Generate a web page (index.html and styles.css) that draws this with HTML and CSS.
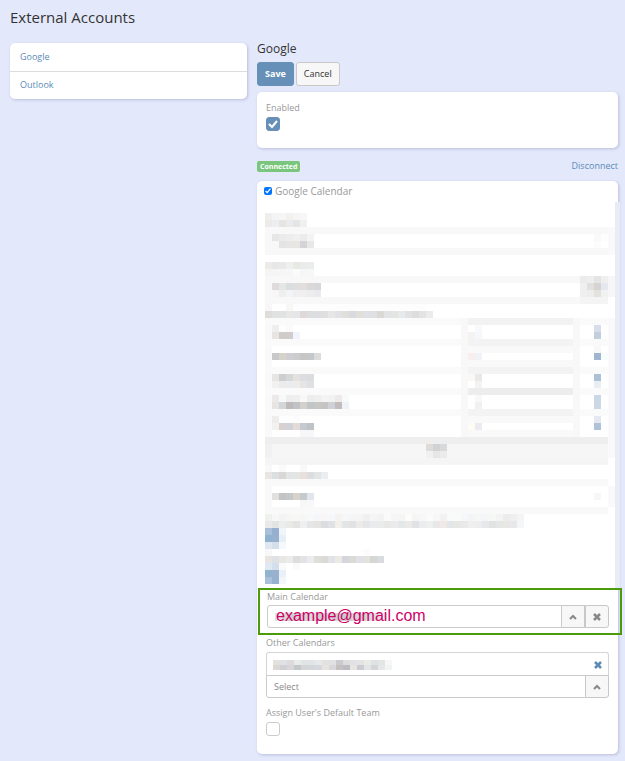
FILE: index.html
```
<!DOCTYPE html>
<html lang="en">
<head>
    <meta charset="UTF-8">
    <meta name="viewport" content="width=device-width, initial-scale=1.0">
    <title>External Accounts</title>
    <link rel="stylesheet" href="styles.css">
</head>
<body>
    <div class="page">
        <h1>External Accounts</h1>
        <div class="columns">
            <nav class="panel account-list">
                <a href="#google">Google</a>
                <a href="#outlook">Outlook</a>
            </nav>

            <main>
                <h2>Google</h2>
                <div class="button-row">
                    <button type="button" class="btn btn-primary">Save</button>
                    <button type="button" class="btn">Cancel</button>
                </div>

                <div class="panel enabled-panel">
                    <label class="field-label" for="enabled">Enabled</label>
                    <input type="checkbox" id="enabled" class="check" checked>
                </div>

                <div class="status-row">
                    <span class="badge">Connected</span>
                    <a href="#disconnect">Disconnect</a>
                </div>

                <form class="panel calendar-panel">
                    <div class="calendar-head">
                        <input type="checkbox" id="googleCalendar" checked>
                        <label for="googleCalendar">Google Calendar</label>
                    </div>

                    <svg id="settings" class="settings" aria-hidden="true"></svg>

                    <div class="highlight">
                        <label class="field-label" for="mainCalendar">Main Calendar</label>
                        <div class="input-group">
                            <div class="value-box">
                                <svg id="mainValue" class="value-mosaic" aria-hidden="true"></svg>
                                <input type="text" id="mainCalendar" class="main-input" value="example@gmail.com">
                            </div>
                            <button type="button" class="btn-icon" aria-label="Select calendar">
                                <svg width="8" height="6" viewBox="0 0 8 6"><path d="M1 5l3-3 3 3"/></svg>
                            </button>
                            <button type="button" class="btn-icon" aria-label="Clear calendar">
                                <svg class="cross" width="8" height="8" viewBox="0 0 8 8"><path d="M1 1l6 6M7 1l-6 6"/></svg>
                            </button>
                        </div>
                    </div>

                    <div class="field">
                        <label class="field-label" for="otherCalendars">Other Calendars</label>
                        <div class="list-item">
                            <svg id="otherValue" class="item-mosaic" aria-hidden="true"></svg>
                            <button type="button" class="btn-remove" aria-label="Remove calendar">
                                <svg class="cross" width="8" height="8" viewBox="0 0 8 8"><path d="M1 1l6 6M7 1l-6 6"/></svg>
                            </button>
                        </div>
                        <div class="input-group attached">
                            <input type="text" id="otherCalendars" class="select-input" placeholder="Select">
                            <button type="button" class="btn-icon" aria-label="Select other calendar">
                                <svg width="8" height="6" viewBox="0 0 8 6"><path d="M1 5l3-3 3 3"/></svg>
                            </button>
                        </div>
                    </div>

                    <div class="field team-field">
                        <label class="field-label" for="defaultTeam">Assign User's Default Team</label>
                        <input type="checkbox" id="defaultTeam" class="check">
                    </div>
                </form>
            </main>
        </div>
    </div>
    <script src="mosaic.js"></script>
</body>
</html>
```
FILE: styles.css
```
* {
    box-sizing: border-box;
}

body {
    margin: 0;
    background: #e3e8fb;
    font-family: "Open Sans", sans-serif;
    font-size: 9px;
    line-height: 14px;
    color: #333;
}

a {
    color: #5b8bb5;
    text-decoration: none;
}

.page {
    padding: 7px 7px 8px 10px;
}

h1 {
    margin: 0 0 16px;
    font-size: 15px;
    line-height: 20px;
    font-weight: 400;
}

h2 {
    margin: 0 0 6px;
    font-size: 12px;
    line-height: 15px;
    font-weight: 400;
}

.columns {
    display: grid;
    grid-template-columns: 237px 1fr;
    gap: 10px;
    align-items: start;
}

.panel {
    background: #fff;
    border-radius: 5px;
    box-shadow: 1px 1px 3px rgba(60, 70, 120, 0.25);
}

.account-list a {
    display: block;
    padding: 7px 10px;
}

.account-list a + a {
    padding-top: 6px;
    border-top: 1px solid #ddd;
}

main {
    min-width: 0;
    margin-top: -2px;
}

.button-row {
    display: flex;
    gap: 2px;
    margin-bottom: 6px;
}

.btn {
    height: 24px;
    padding: 0 7px;
    border: 1px solid #c8c8c8;
    border-radius: 3px;
    background: #f7f7f7;
    color: #333;
    font: 9px/14px "Open Sans", sans-serif;
}

.btn-primary {
    border-color: #6690b8;
    background: #6690b8;
    color: #fff;
    font-weight: 700;
}

.enabled-panel {
    padding: 9px 9px 17px;
}

.field-label {
    display: block;
    color: #999;
}

.check {
    display: block;
    appearance: none;
    width: 14px;
    height: 14px;
    margin: 2px 0 0;
    border: 1px solid #ccc;
    border-radius: 3px;
    background: #fff;
}

.check:checked {
    border-color: #6690b8;
    background: #6690b8 url("data:image/svg+xml,%3Csvg xmlns='http://www.w3.org/2000/svg' viewBox='0 0 12 12'%3E%3Cpath d='M2 6l3 3 5-6' fill='none' stroke='white' stroke-width='2'/%3E%3C/svg%3E") center / 12px no-repeat;
}

.status-row {
    display: flex;
    align-items: center;
    justify-content: space-between;
    padding: 11px 0 8px;
}

.badge {
    padding: 0 3px;
    border-radius: 2px;
    background: #79c67c;
    color: #fff;
    font-size: 7px;
    line-height: 11px;
    font-weight: 700;
}

.calendar-panel {
    padding-bottom: 18px;
}

.calendar-head {
    display: flex;
    align-items: center;
    gap: 3px;
    height: 21px;
    padding: 0 0 1px 7px;
    color: #999;
    font-size: 10px;
}

.calendar-head input {
    width: 8px;
    height: 8px;
    margin: 0;
}

.settings {
    display: block;
    width: 355px;
    height: 387px;
    margin-left: 8px;
    margin-bottom: -1px;
    overflow: visible;
}

/* runs a little past the right edge of the panel */
.highlight {
    position: relative;
    margin: 0 -4px 0 1px;
    padding: 0 11px 5px 7px;
    border: 2px solid #4b9b0b;
}

.input-group {
    display: flex;
    height: 23px;
    margin-top: 1px;
}

.value-box {
    position: relative;
    flex: 1;
    border: 1px solid #ccc;
    border-radius: 3px 0 0 3px;
}

.value-mosaic {
    position: absolute;
    left: 7px;
    top: 7px;
    width: 112px;
    height: 8px;
}

.main-input {
    position: relative;
    display: block;
    width: 100%;
    height: 20px;
    padding: 0 8px;
    border: 0;
    background: transparent;
    color: #cf0067;
    font: 16px/18px "Liberation Sans", Arial, sans-serif;
}

.btn-icon {
    display: flex;
    align-items: center;
    justify-content: center;
    width: 24px;
    margin-left: -1px;
    padding: 0;
    border: 1px solid #c8c8c8;
    background: #f7f7f7;
    color: #888;
}

.btn-icon + .btn-icon {
    margin-left: 0;
}

.btn-icon:last-child {
    border-radius: 0 3px 3px 0;
}

.btn-icon path,
.btn-remove path {
    fill: none;
    stroke: currentColor;
    stroke-width: 2;
}

.btn-icon .cross path,
.btn-remove .cross path {
    stroke-width: 2.5;
}

.field {
    padding: 1px 9px 0;
}

.list-item {
    display: flex;
    align-items: center;
    justify-content: space-between;
    height: 24px;
    margin-top: 2px;
    padding: 0 6px;
    border: 1px solid #d5d5d5;
    border-bottom: 0;
    border-radius: 3px 3px 0 0;
}

.item-mosaic {
    width: 119px;
    height: 10px;
}

.btn-remove {
    display: flex;
    padding: 0;
    border: 0;
    background: none;
    color: #5b8bb5;
}

.attached {
    margin-top: -1px;
}

.select-input {
    flex: 1;
    min-width: 0;
    padding: 0 7px;
    border: 1px solid #ccc;
    border-radius: 0 0 0 3px;
    color: #555;
    font: 9px/14px "Open Sans", sans-serif;
}

.select-input::placeholder {
    color: #888;
}

.attached .btn-icon:last-child {
    border-radius: 0 0 3px 0;
}

.team-field {
    padding-top: 8px;
}
```
FILE: mosaic.js
```
const CELL = 7;

function block(svg, x, y, w, h, color) {
    const rect = document.createElementNS("http://www.w3.org/2000/svg", "rect");
    rect.setAttribute("x", x);
    rect.setAttribute("y", y);
    rect.setAttribute("width", w);
    rect.setAttribute("height", h);
    rect.setAttribute("fill", "#" + color);
    svg.appendChild(rect);
}

function cells(svg, col, row, colors, top = 0, height = CELL) {
    colors.split(" ").forEach((color, i) => {
        block(svg, (col + i) * CELL, top + row * height, CELL, height, color);
    });
}

const settings = document.getElementById("settings");
const TOP = 11;

// wide bands: col, row, columns, rows, color
[
    [0, 2, 1, 4, "f8f8f8"], [0, 9, 1, 4, "f8f8f8"], [0, 15, 1, 17, "f9f9f9"], [0, 38, 1, 4, "f9f9f9"],
    [49, 2, 1, 4, "f9f9f9"], [49, 9, 1, 3, "f6f6f6"], [49, 15, 1, 20, "f9f9f9"], [49, 39, 1, 3, "f9f9f9"],
    [0, 2, 49, 1, "f8f8f8"], [0, 5, 49, 1, "f8f8f8"],
    [0, 9, 49, 1, "f8f8f8"], [0, 12, 45, 1, "f8f8f8"], [45, 12, 4, 1, "f4f4f4"],
    [0, 15, 49, 1, "fafafa"], [0, 18, 49, 1, "fafafa"], [0, 22, 49, 1, "fafafa"],
    [0, 25, 49, 1, "fafafa"], [0, 28, 49, 1, "fafafa"],
    [28, 15, 1, 17, "f8f8f8"], [44, 15, 1, 17, "f8f8f8"],
    [29, 15, 15, 1, "f2f2f2"], [29, 18, 15, 1, "f3f3f3"], [29, 19, 15, 1, "f9f9f9"],
    [29, 21, 15, 1, "f9f9f9"], [29, 22, 15, 1, "f3f3f3"], [29, 25, 15, 1, "ededed"],
    [29, 28, 15, 1, "f3f3f3"], [29, 29, 15, 1, "f9f9f9"], [29, 31, 15, 1, "f9f9f9"],
    [0, 32, 49, 1, "eeeeee"], [0, 33, 49, 2, "f6f6f6"], [0, 33, 1, 2, "f1f1f1"], [0, 35, 49, 1, "f5f5f5"],
    [0, 38, 49, 1, "f9f9f9"], [0, 42, 49, 1, "f9f9f9"], [4, 13, 19, 1, "fdfdfd"]
].forEach(([col, row, w, h, color]) => {
    block(settings, col * CELL, TOP + row * CELL, w * CELL, h * CELL, color);
});

// single cells: col, row, colors
[
    [0, 0, "efefee f4f4f4 f6f6f6 f2f1f0 f5f5f5 f7f7f7"],
    [0, 1, "ecebe9 eceff1 e6e5e2 e8ecef e5e5e5 eef1f0"],
    [1, 3, "e6e6e6 ebebeb ecedef f0f0ef ebebeb f3f3f3"],
    [47, 3, "f9f9f9 fdfdfd"],
    [1, 4, "f8f8f8 e4e4e4 e7e6e5 e7e6e3 d4d4d7 e6e8e6"],
    [47, 4, "fcfcfc"],
    [0, 7, "ecebe9 e7e7e7 e9e9e9 eef0ef e9e9e4 eaebeb ebeced"],
    [0, 8, "f5f5f5 f4f5f6 f6f6f6 f6f7f8 fbfbfb f6f6f6 f7f7f7"],
    [45, 9, "ebebeb eeeeee e3e4e5 efefee"],
    [1, 10, "dfdbdd e3e7e5 dcdddf dededf e3dddc d9d9db d7d7d9"],
    [45, 10, "efefef e1e0df d7d3d0 e6e8f1"],
    [1, 11, "f7f7f7 efeeee f2f4f7 efefef efeff0 edecef eaeaee"],
    [45, 11, "efefef ededec e4e2df f1f1f1"],
    [0, 13, "f7f7f7"], [3, 13, "f8f7f6"],
    [0, 14, "dedddb e0e1e1 e1e2e2 e9e7e5 e4e6e9 dfd8d8 dcdddf dddee0 e0e0e0 e7e7e5 e0e2e5 e0dfda d8dadf e2deda dfe1e4 dee0e4 dbd8d4 e2e3e4 e4e4e3 e8e9eb e1e2e3 dedddb e2e3e5 ebebeb"],
    [1, 16, "efeeec fcfdfd fafafa"], [30, 16, "f8f9fa"], [47, 16, "d7dee9"],
    [1, 17, "e6e5e4 cecdca d0cccb f1f4fa"], [29, 17, "f5f3f2 f4f8fc"], [47, 17, "c3cfdf"],
    [47, 19, "f8f8fa"],
    [1, 20, "c9c8c8 d6d3cd cfcfd3 ccccce c6c6c5 c4c8cb dcdcde"], [29, 20, "f7eeed eff3f8"], [47, 20, "a0b6d0 f9fcfd"],
    [1, 23, "e6e5e4 cececf d6d7d9 e4e1de dcdde0 dadcdf"], [29, 23, "faf7f5 e9e9ea"], [47, 23, "acc0d8"],
    [1, 24, "f2f1f1 ebebeb eaecef eeecea e6e5e4 dde1e4"], [30, 24, "f3f3f3"], [47, 24, "ebedf4"],
    [1, 26, "ebeae8 f7f8f8 eeeeee efefee f7f8f9 ecedec efefef f4f4f4 f2f2f2 ecebe9 f8f9fb"], [30, 26, "f7f9f8"], [47, 26, "cbd7e6"],
    [1, 27, "e6e5e2 d3d6d9 bfbaba c0c2c7 d3d1ca c1c5c6 c7c8c6 c7c3c2 ced1d8 c2bdbc eff2f8"], [30, 27, "eff1f2"], [47, 27, "cdd8e5"],
    [1, 29, "efedeb fbfdfe fcfdfd fcfcfc"], [47, 29, "e6e8f1"],
    [1, 30, "f1f1ef d9d1d0 d1d2d9 e3dcd6 c5cad0 bec3c8"], [29, 30, "fdfdf6 ebebf1"], [47, 30, "afc2d9"],
    [5, 31, "f7f7f8 f6f6fb"],
    [23, 33, "dedbd9 d0d3d5 d9d9d9"],
    [23, 34, "f0f0f0 e6e6e6 ebebeb"],
    [0, 36, "f8f8f8"], [2, 36, "fafafa"], [5, 36, "f8f8f8"],
    [0, 37, "e9e5e2 dcdfe0 dad8d6 e3e4e5 e4e5e5 e7e0dd dbddde e1e5e5 ebeeee"],
    [1, 40, "e2dfdf c3c3c3 c4c8ca d8d2cb c5cacd e2e5ed"], [47, 40, "f7f7f7"],
    [5, 41, "f8f7f6 f6f8fb"],
    [0, 43, "eff1ef f7f7f7 f2f4f3 f6f6f4 f7f7f5 f6f6f4 f6f8fa f4f6fa f8f7f5 f5f7fa f5f3f1 f7f7f7 f4f5f6 f5f5f5 f0f0f0 f5f5f5 f2f2f2 fafafa f6f6f5 f5f5f5 fcfcf9 f6f5f4 f7f7f7 fbfbfb f7f7f7 f4f2f1 f8f9f9 fafaf8 f5f7fa f4f4f5 f5f7f7 f3f5f8 f7f7f6 f3f3f4 edecea eeeff1 f4f4f4"],
    [0, 44, "e9e9e9 e3e3e3 eceeed e9e9e6 e4e5e3 eef0f0 e5e6e8 e6e4e2 dcdde1 dfe1e5 f3f0ec e4e5e7 e2e2e4 ecebe7 e5e6e8 e9ebec ebebeb e8e9e7 ebebeb e5e8e9 ebeae8 e0e2e6 ebecee eef0ef e8e8e9 f0e9e7 e3e6e8 e7e7e4 e8e9eb efefef ecedec e6e8ec e2e2e1 e5e7e6 e8e7e4 e6e8ea f4f6fa"],
    [0, 45, "a8bed9 95b0cf f0f5fa"],
    [0, 46, "90b2d1 97b1ce e8eef6"],
    [0, 47, "dfe7ef d3dfeb f6f9fc"],
    [0, 48, "f8f8f8"], [14, 48, "fcfcfc"],
    [0, 49, "e8e4e1 dfe2e5 e8e7e4 eaecea dddddb e1e3e5 ececee dedfda dcdad7 e0e4e8 ebeae5 d4d7da dadbd6 dfe1e4 e2e3e0 d6d6d3 d8dcdf"],
    [0, 50, "dfe9f2 d3dfeb fafafa"], [4, 50, "fafafa"],
    [0, 51, "91b3d0 97b1ce eaf0f8"],
    [0, 52, "a9bfda 96b1ce f2f6fb"]
].forEach(([col, row, colors]) => cells(settings, col, row, colors, TOP));

// scroll track
block(settings, 350, 0, 5, 387, "eaecf5");

const mainValue = document.getElementById("mainValue");
cells(mainValue, 0, 0, "e4e4e4 d8d4d4 d0d2d4 d6d2d0 d4d6d8 dcdad8 d0d0d4 dcdcdc d4d2d0 c8ccd0 d0cccc d8d8dc d4d4d0 d8dadc e0e0e0 eeeeee", 0, 8);

const otherValue = document.getElementById("otherValue");
cells(otherValue, 0, 0, "e5e1df dfe1e4 dddbd9 e7ebea e1e3e5 e3e4e6 e6e8ea e4e2df dfe1e2 c8cacd dedddb e0e2e5 e3e4e6 ebeae6 dfe2e4 e3e5e4 f5f7f8", 0, 5);
cells(otherValue, 0, 1, "ddd8d6 cfd0d6 d7d7d9 c3c8c8 d3d5d6 d4d7da d5d8dc e6e4e0 d9d7d9 c4c0bf bbbcc1 e7e5e2 cbccd2 e2e4e6 d3d6d7 e6e8e7 f2f4f4", 0, 5);
```
